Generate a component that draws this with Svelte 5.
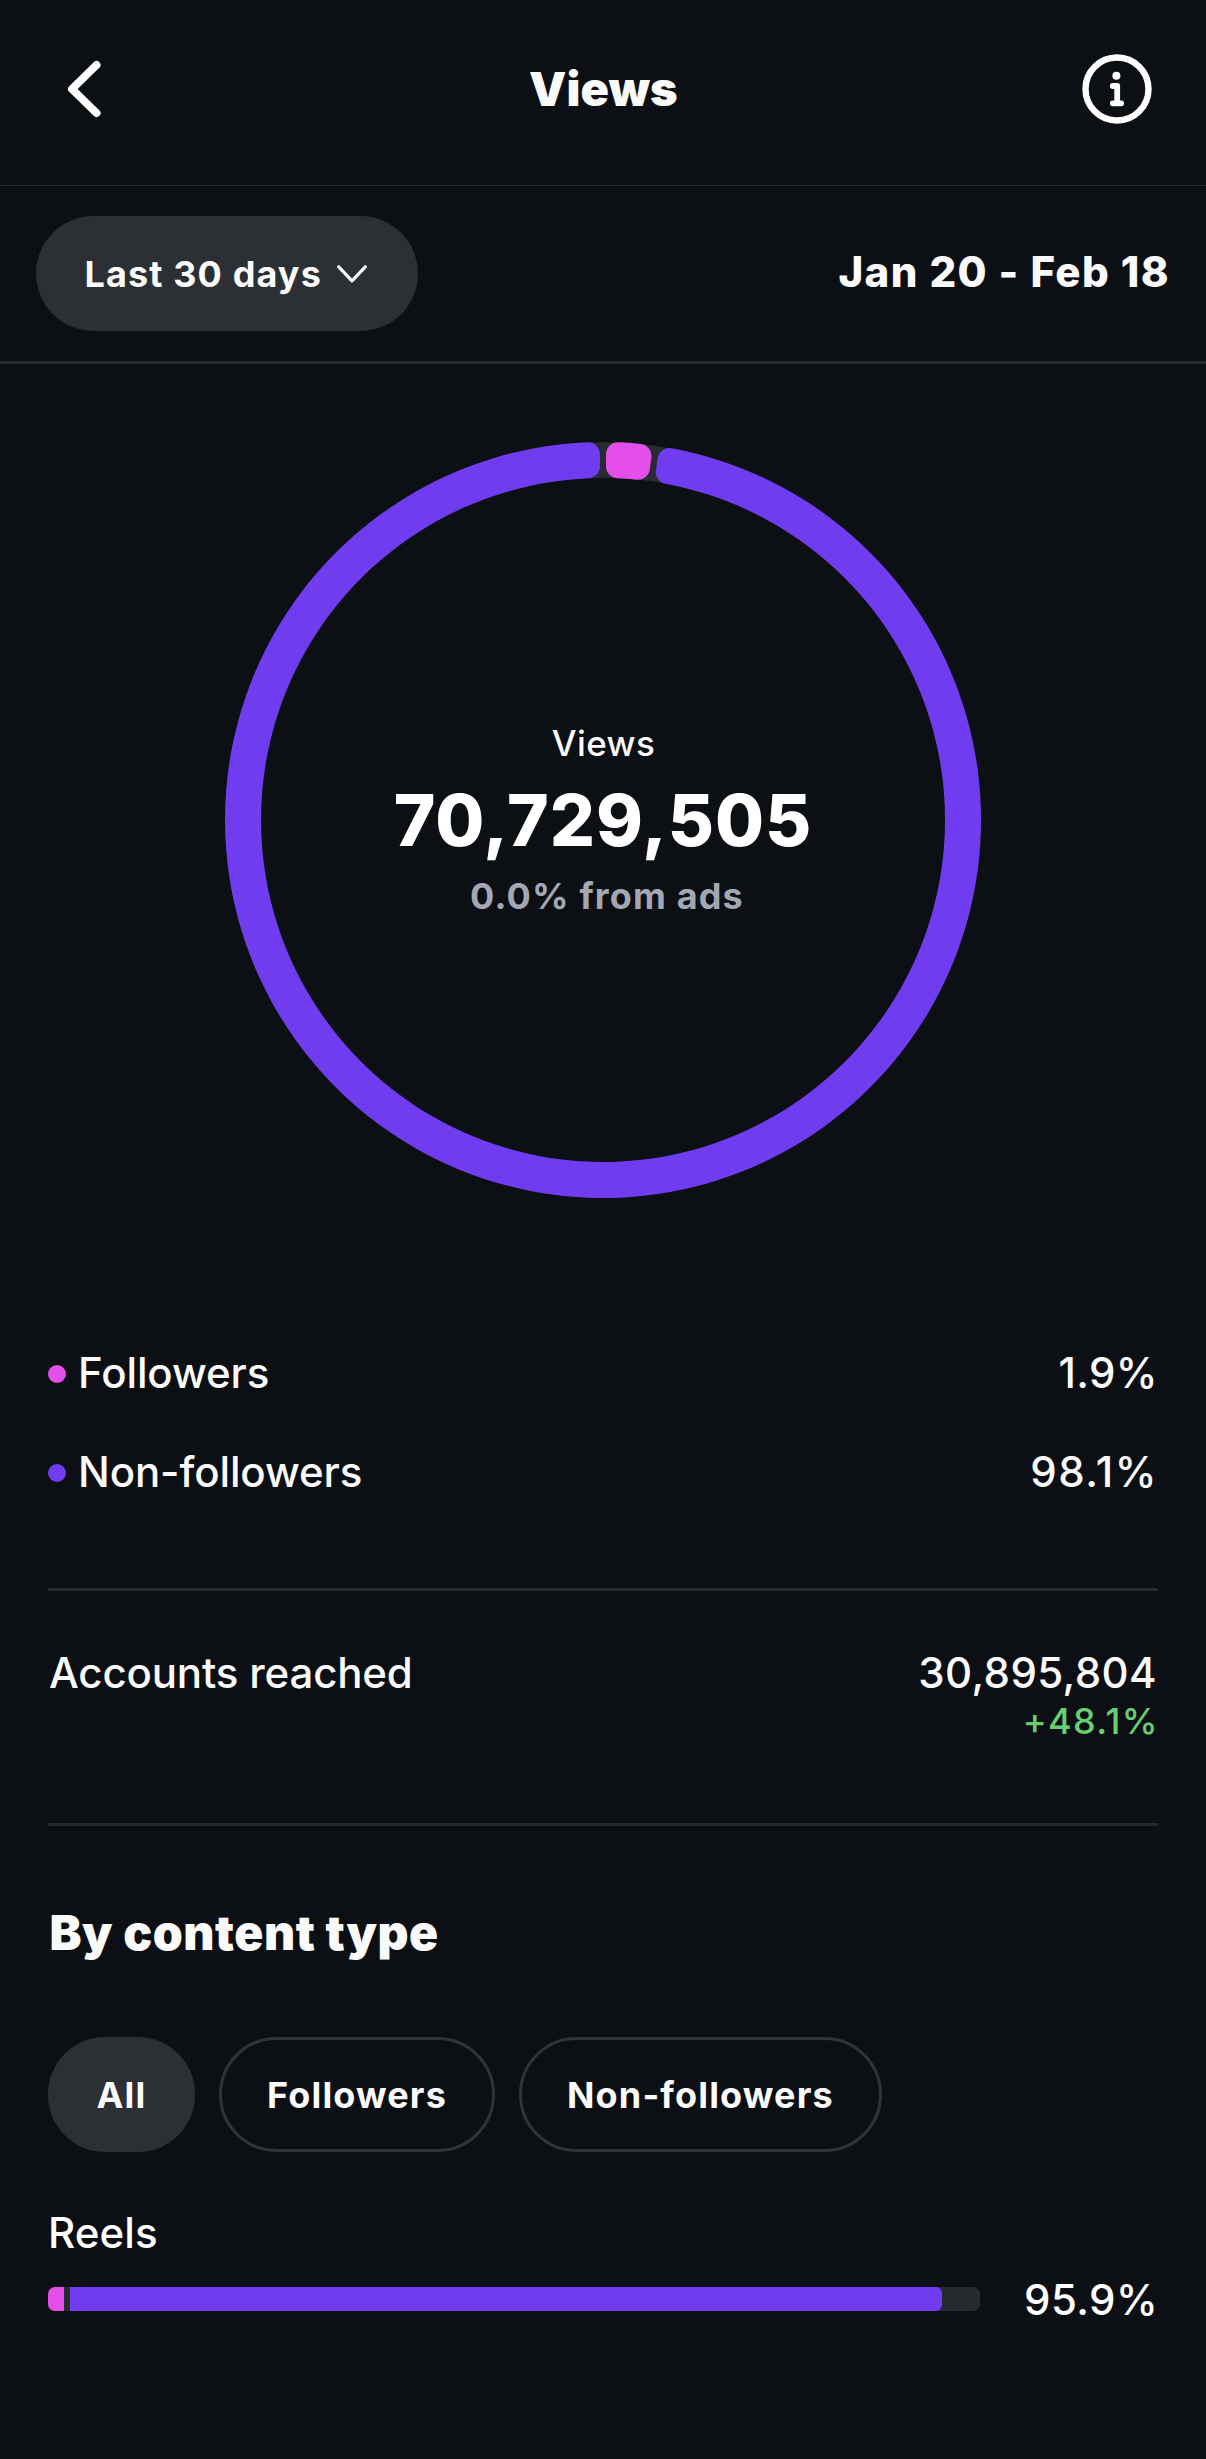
<script lang="ts">
  interface Slice {
    from: number;
    to: number;
    colour: string;
  }

  const OUTER = 378;
  const INNER = 342;
  const CORNER = 12;

  const slices: Slice[] = [
    { from: 0.48, to: 7.6, colour: '#e44fea' },
    { from: 8.6, to: 359.52, colour: '#6f3cf0' },
  ];

  const filters = ['All', 'Followers', 'Non-followers'];
  let selected = $state('All');

  const reels = { followers: 1.72, nonFollowers: 93.56, total: '95.9%' };

  function point(radius: number, angle: number) {
    const x = OUTER + radius * Math.sin(angle);
    const y = OUTER - radius * Math.cos(angle);
    return `${x.toFixed(2)} ${y.toFixed(2)}`;
  }

  // Ring segment with rounded corners, angles clockwise from the top
  function segment({ from, to }: Slice) {
    const a = (from * Math.PI) / 180;
    const b = (to * Math.PI) / 180;
    const outerPad = Math.asin(CORNER / (OUTER - CORNER));
    const innerPad = Math.asin(CORNER / (INNER + CORNER));
    const outerEdge = (OUTER - CORNER) * Math.cos(outerPad);
    const innerEdge = (INNER + CORNER) * Math.cos(innerPad);
    const large = b - a > Math.PI ? 1 : 0;

    return [
      `M ${point(innerEdge, a)}`,
      `L ${point(outerEdge, a)}`,
      `A ${CORNER} ${CORNER} 0 0 1 ${point(OUTER, a + outerPad)}`,
      `A ${OUTER} ${OUTER} 0 ${large} 1 ${point(OUTER, b - outerPad)}`,
      `A ${CORNER} ${CORNER} 0 0 1 ${point(outerEdge, b)}`,
      `L ${point(innerEdge, b)}`,
      `A ${CORNER} ${CORNER} 0 0 1 ${point(INNER, b - innerPad)}`,
      `A ${INNER} ${INNER} 0 ${large} 0 ${point(INNER, a + innerPad)}`,
      `A ${CORNER} ${CORNER} 0 0 1 ${point(innerEdge, a)}`,
      'Z',
    ].join(' ');
  }
</script>

<div class="screen">
  <header class="header">
    <button class="icon-button" aria-label="Back">
      <svg width="36" height="60" viewBox="0 0 36 60" fill="none" stroke="currentColor" stroke-width="8" stroke-linecap="round" stroke-linejoin="round">
        <polyline points="29.5 6 5 30 29.5 54"></polyline>
      </svg>
    </button>
    <h1 class="title">Views</h1>
    <button class="icon-button end" aria-label="About views">
      <svg width="70" height="70" viewBox="0 0 70 70" fill="none" stroke="currentColor">
        <circle cx="35" cy="35" r="31.5" stroke-width="6.4"></circle>
        <circle cx="34.4" cy="21.7" r="4" fill="currentColor" stroke="none"></circle>
        <path d="M30.8 32h4.4v17.3M30.8 49.3h8.4" stroke-width="5.8" stroke-linecap="round" stroke-linejoin="round"></path>
      </svg>
    </button>
  </header>

  <div class="period">
    <button class="period-button">
      <span class="period-label">Last 30 days</span>
      <svg width="30" height="18" viewBox="0 0 30 18" fill="none" stroke="currentColor" stroke-width="3.2" stroke-linecap="round" stroke-linejoin="round">
        <polyline points="1.7 1.8 15 15.8 28.3 1.8"></polyline>
      </svg>
    </button>
    <span class="period-dates">Jan 20 - Feb 18</span>
  </div>

  <main class="content">
    <section class="chart">
      <svg width="756" height="756" viewBox="0 0 756 756" aria-hidden="true">
        <circle cx="378" cy="378" r="360" fill="none" stroke="#282b2f" stroke-width="35.5"></circle>
        {#each slices as slice}
          <path d={segment(slice)} fill={slice.colour}></path>
        {/each}
      </svg>
      <div class="chart-text">
        <span class="chart-label">Views</span>
        <strong class="chart-total">70,729,505</strong>
        <span class="chart-ads">0.0% from ads</span>
      </div>
    </section>

    <ul class="legend">
      <li class="legend-row">
        <span class="dot followers"></span>
        <span class="legend-name">Followers</span>
        <span class="figure">1.9%</span>
      </li>
      <li class="legend-row">
        <span class="dot non-followers"></span>
        <span class="legend-name">Non-followers</span>
        <span class="figure loose">98.1%</span>
      </li>
    </ul>

    <section class="reached">
      <span class="reached-label">Accounts reached</span>
      <div class="reached-values">
        <span class="reached-total">30,895,804</span>
        <span class="reached-change">+48.1%</span>
      </div>
    </section>

    <section>
      <h2 class="section-title">By content type</h2>
      <div class="filters">
        {#each filters as filter}
          <button class="filter" class:active={selected === filter} onclick={() => (selected = filter)}>
            {filter}
          </button>
        {/each}
      </div>

      <div class="type-name">Reels</div>
      <div class="type-row">
        <div class="bar">
          <span class="bar-part followers" style="width: {reels.followers}%"></span>
          <span class="bar-part non-followers" style="width: {reels.nonFollowers}%"></span>
        </div>
        <span class="figure">{reels.total}</span>
      </div>
    </section>
  </main>
</div>

<style>
  :global(body) {
    margin: 0;
    background: #0c0f14;
  }

  .screen {
    --text: #fafafb;
    --line: #26292e;
    --pill: #2c2f33;
    --pink: #e44fea;
    --purple: #6f3cf0;
    min-height: 2459px;
    box-sizing: border-box;
    background: #0c0f14;
    color: var(--text);
    font-family: Inter, 'Liberation Sans', sans-serif;
    font-size: 42px;
    font-weight: 500;
  }

  button {
    margin: 0;
    border: none;
    background: none;
    color: inherit;
    font-family: inherit;
    cursor: pointer;
  }

  .header {
    display: grid;
    grid-template-columns: 1fr auto 1fr;
    align-items: center;
    height: 178px;
    padding: 0 54px 7px 67px;
    border-bottom: 1px solid #24272b;
  }

  .icon-button {
    display: flex;
    justify-self: start;
    padding: 0;
    color: #fff;
  }

  .icon-button.end {
    justify-self: end;
  }

  .title {
    margin: 0 0 0 -12px;
    font-size: 47px;
    font-weight: 900;
    line-height: 60px;
    letter-spacing: 0.12px;
  }

  .period {
    display: flex;
    align-items: center;
    justify-content: space-between;
    height: 175px;
    padding: 0 36px;
    border-bottom: 3px solid var(--line);
  }

  .period-button {
    display: flex;
    align-items: center;
    gap: 15.5px;
    height: 115px;
    padding: 0 51px 0 48.5px;
    border-radius: 58px;
    background: var(--pill);
  }

  .period-label {
    font-size: 36px;
    font-weight: 700;
    letter-spacing: 1.12px;
  }

  .period-dates {
    padding-bottom: 4px;
    font-weight: 800;
    letter-spacing: 1.4px;
  }

  .content {
    padding: 78px 48px 0;
  }

  .chart {
    display: grid;
    place-items: center;
  }

  .chart > * {
    grid-area: 1 / 1;
  }

  .chart-text {
    display: flex;
    flex-direction: column;
    align-items: center;
    padding-bottom: 2px;
  }

  .chart-label {
    padding-left: 1px;
    font-size: 35px;
    line-height: 44px;
    letter-spacing: 0.4px;
  }

  .chart-total {
    color: #fff;
    font-size: 71px;
    font-weight: 800;
    line-height: 110px;
    letter-spacing: 1px;
  }

  .chart-ads {
    padding-left: 8px;
    color: #a2a7b3;
    font-size: 36px;
    font-weight: 700;
    line-height: 42px;
    letter-spacing: 1.15px;
  }

  .legend {
    margin: 126px 0 0;
    padding: 0 0 66px;
    border-bottom: 3px solid var(--line);
    list-style: none;
  }

  .legend-row {
    display: flex;
    align-items: center;
    gap: 12px;
    height: 99px;
  }

  .legend-row > :not(.dot) {
    padding-bottom: 2px;
  }

  .legend-name {
    flex: 1;
    letter-spacing: -0.1px;
  }

  .dot {
    width: 18px;
    height: 18px;
    border-radius: 50%;
  }

  .followers {
    background: var(--pink);
  }

  .non-followers {
    background: var(--purple);
  }

  .figure {
    letter-spacing: 0.4px;
  }

  .figure.loose {
    letter-spacing: 1.5px;
  }

  .reached {
    display: flex;
    justify-content: space-between;
    padding: 54px 0 82px 1px;
    border-bottom: 3px solid var(--line);
    line-height: 56px;
  }

  .reached-label {
    letter-spacing: -0.15px;
  }

  .reached-values {
    display: flex;
    flex-direction: column;
    align-items: flex-end;
  }

  .reached-total {
    margin-right: 1px;
    letter-spacing: 0.4px;
  }

  .reached-change {
    margin-right: -1px;
    color: #68ce72;
    font-size: 36px;
    line-height: 40px;
    letter-spacing: 1.4px;
  }

  .section-title {
    margin: 77px 0 74px 1.5px;
    font-size: 48px;
    font-weight: 900;
    line-height: 60px;
    letter-spacing: 0.55px;
  }

  .filters {
    display: flex;
    gap: 24px;
  }

  .filter {
    box-sizing: border-box;
    height: 115px;
    min-width: 147px;
    padding: 0 45px;
    border: 3px solid #303337;
    border-radius: 58px;
    font-size: 36px;
    font-weight: 700;
    letter-spacing: 1.15px;
  }

  .filter.active {
    border-color: var(--pill);
    background: var(--pill);
  }

  .type-name {
    margin-top: 53px;
    color: #fff;
    line-height: 56px;
    letter-spacing: 0.1px;
  }

  .type-row {
    display: flex;
    align-items: center;
    justify-content: space-between;
    height: 56px;
    margin-top: 10px;
    color: #fff;
  }

  .bar {
    display: flex;
    gap: 6px;
    width: 932px;
    height: 24px;
    border-radius: 7px;
    background: #26292d;
    overflow: hidden;
  }

  .bar-part:last-child {
    border-radius: 0 6px 6px 0;
  }
</style>
